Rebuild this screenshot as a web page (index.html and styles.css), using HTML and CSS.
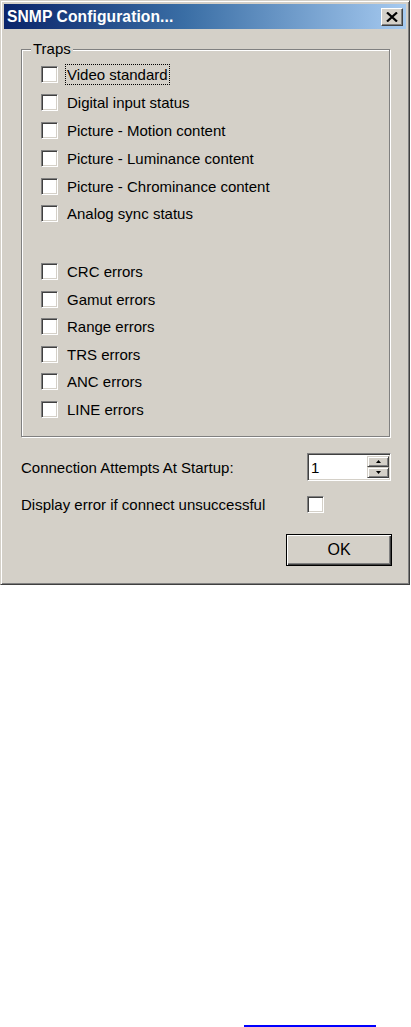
FILE: index.html
```html
<!DOCTYPE html>
<html>
<head>
<meta charset="utf-8">
<link rel="stylesheet" href="styles.css">
</head>
<body>
<div class="window">
  <div class="titlebar">
    <span class="title">SNMP Configuration...</span>
    <span class="close">
      <svg width="12" height="10" viewBox="0 0 12 10"><path d="M1 0.5 L11 9.5 M11 0.5 L1 9.5" stroke="#000" stroke-width="2.2" fill="none"/></svg>
    </span>
  </div>
  <div class="content">
    <fieldset class="group">
      <legend class="legend">Traps</legend>
      <div class="row"><span class="cb"></span><span class="label focus">Video standard</span></div>
      <div class="row"><span class="cb"></span><span class="label">Digital input status</span></div>
      <div class="row"><span class="cb"></span><span class="label">Picture - Motion content</span></div>
      <div class="row"><span class="cb"></span><span class="label">Picture - Luminance content</span></div>
      <div class="row"><span class="cb"></span><span class="label">Picture - Chrominance content</span></div>
      <div class="row"><span class="cb"></span><span class="label">Analog sync status</span></div>
      <div class="spacer"></div>
      <div class="row row-b"><span class="cb"></span><span class="label">CRC errors</span></div>
      <div class="row row-b"><span class="cb"></span><span class="label">Gamut errors</span></div>
      <div class="row row-b"><span class="cb"></span><span class="label">Range errors</span></div>
      <div class="row row-b"><span class="cb"></span><span class="label">TRS errors</span></div>
      <div class="row row-b"><span class="cb"></span><span class="label">ANC errors</span></div>
      <div class="row row-b"><span class="cb"></span><span class="label">LINE errors</span></div>
    </fieldset>
    <div class="field field-spin">
      <span class="field-label">Connection Attempts At Startup:</span>
      <div class="spin">
        <span class="spin-value">1</span>
        <div class="spin-btns">
          <span class="sbtn"><svg width="5" height="3" viewBox="0 0 5 3"><path d="M2.5 0 L5 3 L0 3 Z" fill="#000"/></svg></span>
          <span class="sbtn"><svg width="5" height="3" viewBox="0 0 5 3"><path d="M0 0 L5 0 L2.5 3 Z" fill="#000"/></svg></span>
        </div>
      </div>
    </div>
    <div class="field field-check">
      <span class="field-label">Display error if connect unsuccessful</span>
      <span class="cb"></span>
    </div>
    <div class="actions">
      <span class="btn-ok">OK</span>
    </div>
  </div>
</div>
<div class="link-line"></div>
</body>
</html>
```
FILE: styles.css
```css
html, body {
  margin: 0;
  padding: 0;
  background: #ffffff;
}
body {
  height: 1027px;
  display: flex;
  flex-direction: column;
  font-family: "Liberation Sans", Arial, sans-serif;
  font-size: 15px;
  color: #000;
  overflow: hidden;
}
.window {
  width: 410px;
  height: 585px;
  box-sizing: border-box;
  background: #d4d0c8;
  border: 1px solid;
  border-color: #d4d0c8 #404040 #404040 #d4d0c8;
  box-shadow: inset 1px 1px 0 #ffffff, inset -1px -1px 0 #808080;
  padding: 3px;
  display: flex;
  flex-direction: column;
}
.titlebar {
  height: 25px;
  background: linear-gradient(to right, #0a246a 0%, #3a6ea5 45%, #a6caf0 100%);
  display: flex;
  align-items: center;
  justify-content: space-between;
  padding: 0 3px 0 3px;
}
.title {
  color: #ffffff;
  font-weight: bold;
  font-size: 15.6px;
  letter-spacing: 0.1px;
}
.close {
  width: 22px;
  height: 18px;
  box-sizing: border-box;
  background: #d4d0c8;
  border: 1px solid;
  border-color: #ffffff #404040 #404040 #ffffff;
  box-shadow: inset -1px -1px 0 #808080;
  display: flex;
  align-items: center;
  justify-content: center;
}
.content {
  padding: 0 15px 0 17px;
  display: flex;
  flex-direction: column;
}
.group {
  margin: 12px 1px 0 0;
  padding: 4px 0 13px 0;
  border: 1px solid #808080;
  box-shadow: inset 1px 1px 0 #ffffff, 1px 1px 0 #ffffff;
  min-width: 0;
}
.legend {
  margin-left: 9px;
  padding: 0 2px;
  line-height: 16px;
  background: #d4d0c8;
}
.row {
  height: 27.8px;
  display: flex;
  align-items: center;
  padding-left: 19px;
}
.row-b {
  height: 27.6px;
}
.spacer {
  height: 30px;
}
.cb {
  width: 17px;
  height: 17px;
  box-sizing: border-box;
  background: #ffffff;
  border: 1px solid;
  border-color: #808080 #ffffff #ffffff #808080;
  box-shadow: inset 1px 1px 0 #404040, inset -1px -1px 0 #d4d0c8;
  flex: none;
}
.label {
  margin-left: 7px;
  padding: 1px;
  line-height: 17px;
  border: 1px dotted transparent;
}
.label.focus {
  border-color: #000;
}
.field {
  display: grid;
  grid-template-columns: 1fr 84px;
  align-items: center;
}
.field-label {
  line-height: 17px;
}
.field-spin {
  margin-top: 16px;
  height: 28px;
}
.spin {
  height: 28px;
  box-sizing: border-box;
  background: #ffffff;
  border: 1px solid;
  border-color: #808080 #ffffff #ffffff #808080;
  box-shadow: inset 1px 1px 0 #404040, inset -1px -1px 0 #d4d0c8;
  padding: 2px 1px 2px 2px;
  display: flex;
  align-items: stretch;
  justify-content: space-between;
}
.spin-value {
  padding-left: 1px;
  line-height: 24px;
}
.spin-btns {
  width: 22px;
  display: flex;
  flex-direction: column;
}
.sbtn {
  flex: 1;
  box-sizing: border-box;
  background: #d4d0c8;
  border: 1px solid;
  border-color: #d4d0c8 #404040 #404040 #d4d0c8;
  box-shadow: inset 1px 1px 0 #ffffff, inset -1px -1px 0 #808080;
  display: flex;
  align-items: center;
  justify-content: center;
}
.field-check {
  margin-top: 15px;
  height: 17px;
}
.actions {
  margin-top: 21px;
  margin-right: -1px;
  display: flex;
  justify-content: flex-end;
}
.btn-ok {
  width: 106px;
  height: 32px;
  box-sizing: border-box;
  border: 1px solid #000;
  box-shadow: inset 1px 1px 0 #ffffff, inset -1px -1px 0 #404040, inset -2px -2px 0 #808080;
  background: #d4d0c8;
  display: flex;
  align-items: center;
  justify-content: center;
  font-size: 16px;
}
.link-line {
  margin-top: auto;
  margin-left: 244px;
  width: 132px;
  height: 2px;
  background: #0000ff;
}
```
